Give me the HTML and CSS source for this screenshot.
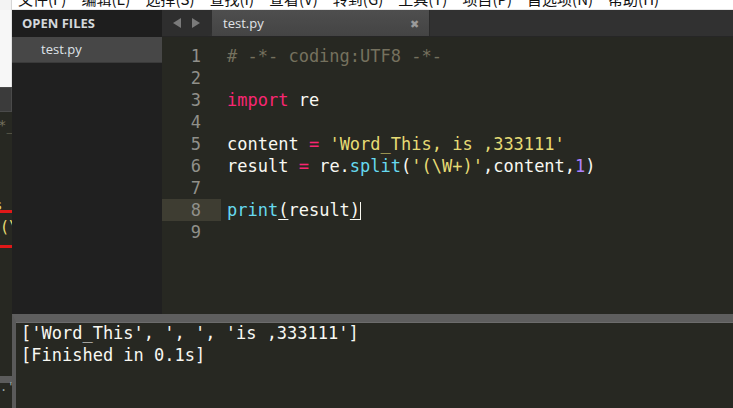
FILE: index.html
```html
<!DOCTYPE html>
<html>
<head>
	<title>test.py - Sublime Text</title>
	<link rel="stylesheet" href="styles.css">
</head>
<body>

<div class="desk">

	<div class="behind">
		<div class="b-top"></div>
		<div class="b-white"></div>
		<div class="b-tabs"></div>
		<div class="b-code">
			<div class="b-glyph b-star">*_</div>
			<div class="b-glyph b-s">s</div>
			<div class="b-red"></div>
			<div class="b-glyph b-paren">(\W</div>
			<div class="b-red b-red2"></div>
		</div>
		<div class="b-bar"></div>
		<div class="b-dots">.'.</div>
	</div>

	<div class="window">

		<div class="menubar">
			<div class="menu">
				<span>文件(F)</span>
				<span>编辑(E)</span>
				<span>选择(S)</span>
				<span>查找(I)</span>
				<span>查看(V)</span>
				<span>转到(G)</span>
				<span>工具(T)</span>
				<span>项目(P)</span>
				<span>首选项(N)</span>
				<span>帮助(H)</span>
			</div>
		</div>

		<div class="main">

			<div class="sidebar">
				<div class="side-head">OPEN FILES</div>
				<div class="side-file">test.py</div>
			</div>

			<div class="pane">
				<div class="tabbar">
					<div class="arrows">
						<svg width="30" height="10" viewBox="0 0 30 10">
							<polygon points="9,0 9,10 1,5" fill="#7a7a7a"/>
							<polygon points="20,0 20,10 28,5" fill="#7a7a7a"/>
						</svg>
					</div>
					<div class="tab">
						<span>test.py</span>
						<span class="close">&#x2716;</span>
					</div>
				</div>

				<div class="editor">
					<div class="line"><span class="num">1</span><span class="code"><span class="cm"># -*- coding:UTF8 -*-</span></span></div>
					<div class="line"><span class="num">2</span><span class="code"></span></div>
					<div class="line"><span class="num">3</span><span class="code"><span class="kw">import</span> re</span></div>
					<div class="line"><span class="num">4</span><span class="code"></span></div>
					<div class="line"><span class="num">5</span><span class="code">content <span class="kw">=</span> <span class="st">'Word_This, is ,333111'</span></span></div>
					<div class="line"><span class="num">6</span><span class="code">result <span class="kw">=</span> re.<span class="fn">split</span>(<span class="st">'(\W+)'</span>,content,<span class="nb">1</span>)</span></div>
					<div class="line"><span class="num">7</span><span class="code"></span></div>
					<div class="line current"><span class="num">8</span><span class="code"><span class="fn">print</span><span class="match">(</span>result<span class="match">)</span><span class="caret"></span></span></div>
					<div class="line"><span class="num">9</span><span class="code"></span></div>
				</div>
			</div>

		</div>

		<div class="output">
			<div class="out-line">['Word_This', ', ', 'is ,333111']</div>
			<div class="out-line">[Finished in 0.1s]</div>
		</div>

	</div>

</div>

</body>
</html>
```

FILE: styles.css
```css
*{
	margin: 0;
	padding: 0;
	box-sizing: border-box;
}

html, body{
	width: 733px;
	height: 408px;
	overflow: hidden;
	background: #272822;
}

.desk{
	display: flex;
	height: 408px;
}

/* window peeking out on the left */
.behind{
	width: 12px;
	display: flex;
	flex-direction: column;
	overflow: hidden;
	background: #272822;
}

.b-top{
	height: 10px;
	background: #f3f3f3;
	border-right: 1px solid #d6d6d6;
}

.b-white{
	height: 77px;
	background: #f7f7f7;
	border-right: 1px solid #e2e2e2;
}

.b-tabs{
	height: 25px;
	background: #3b3b3b;
	border: 1px solid #4a4a4a;
	border-left: none;
}

.b-code{
	flex: 1;
	font-family: "DejaVu Sans Mono", monospace;
	font-size: 14px;
	line-height: 14px;
	white-space: nowrap;
	display: flex;
	flex-direction: column;
}

.b-glyph{
	color: #75715e;
	margin-left: -2px;
}

.b-star{
	margin-top: 6px;
}

.b-s{
	margin-top: 66px;
	color: #e6db74;
	margin-left: -6px;
}

.b-red{
	height: 3px;
	background: #e01818;
	margin-top: -2px;
}

.b-paren{
	color: #e6db74;
	margin-top: 6px;
	font-size: 15px;
	line-height: 16px;
	margin-left: 0;
}

.b-red2{
	margin-top: 10px;
}

.b-bar{
	height: 7px;
	background: #5c5c5c;
}

.b-dots{
	height: 25px;
	color: #9aa;
	font-family: "DejaVu Sans Mono", monospace;
	font-size: 12px;
	line-height: 8px;
	white-space: nowrap;
}

/* main window */
.window{
	flex: 1;
	display: flex;
	flex-direction: column;
	min-width: 0;
}

.menubar{
	height: 10px;
	background: #fff;
	overflow: hidden;
	border-bottom: 1px solid #e8e8e8;
}

.menu{
	display: flex;
	gap: 15px;
	padding-left: 6px;
	margin-top: -9px;
	font-family: "Noto Sans CJK SC", sans-serif;
	font-size: 15px;
	line-height: 15px;
	color: #111;
	white-space: nowrap;
}

.main{
	display: flex;
	height: 304px;
}

.sidebar{
	width: 150px;
	background: #202020;
	font-family: "Open Sans", sans-serif;
}

.side-head{
	height: 27px;
	line-height: 26px;
	padding-left: 10px;
	font-size: 13px;
	font-weight: 700;
	color: #d4d8dc;
	background: #1e1e1e;
}

.side-file{
	height: 26px;
	line-height: 25px;
	padding-left: 29px;
	font-size: 13px;
	color: #dfe3e8;
	background: #474747;
	border-bottom: 1px solid #3a3a3a;
}

.pane{
	flex: 1;
	display: flex;
	flex-direction: column;
}

.tabbar{
	height: 27px;
	display: flex;
	background: #313131;
	border-bottom: 1px solid #262626;
	font-family: "Open Sans", sans-serif;
}

.arrows{
	width: 50px;
	display: flex;
	align-items: center;
	padding-left: 10px;
	background: #2e2e2e;
	border-bottom-right-radius: 5px;
}

.tab{
	width: 218px;
	display: flex;
	align-items: center;
	justify-content: space-between;
	padding: 0 10px 0 11px;
	font-size: 13px;
	color: #e0e4e8;
	background: linear-gradient(#4e4e4e, #444);
	border-right: 1px solid #2a2a2a;
}

.close{
	font-size: 11px;
	color: #9a9a9a;
}

.editor{
	flex: 1;
	padding-top: 8px;
	background: #272822;
	font-family: "DejaVu Sans Mono", monospace;
	font-size: 17px;
	color: #f8f8f2;
}

.line{
	display: flex;
	height: 22px;
	line-height: 22px;
	white-space: pre;
}

.num{
	width: 59px;
	padding-right: 20px;
	text-align: right;
	color: #90908a;
}

.current .num{
	background: #3e3d32;
}

.code{
	padding-left: 6px;
}

.cm{ color: #75715e; }
.kw{ color: #f92672; }
.st{ color: #e6db74; }
.fn{ color: #66d9ef; }
.nb{ color: #ae81ff; }

.match{
	text-decoration: underline;
	text-underline-offset: 3px;
}

.caret{
	display: inline-block;
	width: 1px;
	height: 18px;
	vertical-align: -4px;
	background: #f8f8f0;
}

.output{
	flex: 1;
	background: #272822;
	border-top: 8px solid #5e5e5e;
	border-left: 4px solid #5a5a5a;
	box-shadow: inset 0 1px 0 #6c6c6c;
	padding-left: 5px;
	font-family: "DejaVu Sans Mono", monospace;
	font-size: 17px;
	color: #f8f8f2;
}

.out-line{
	height: 22px;
	line-height: 22px;
	white-space: pre;
}
```
